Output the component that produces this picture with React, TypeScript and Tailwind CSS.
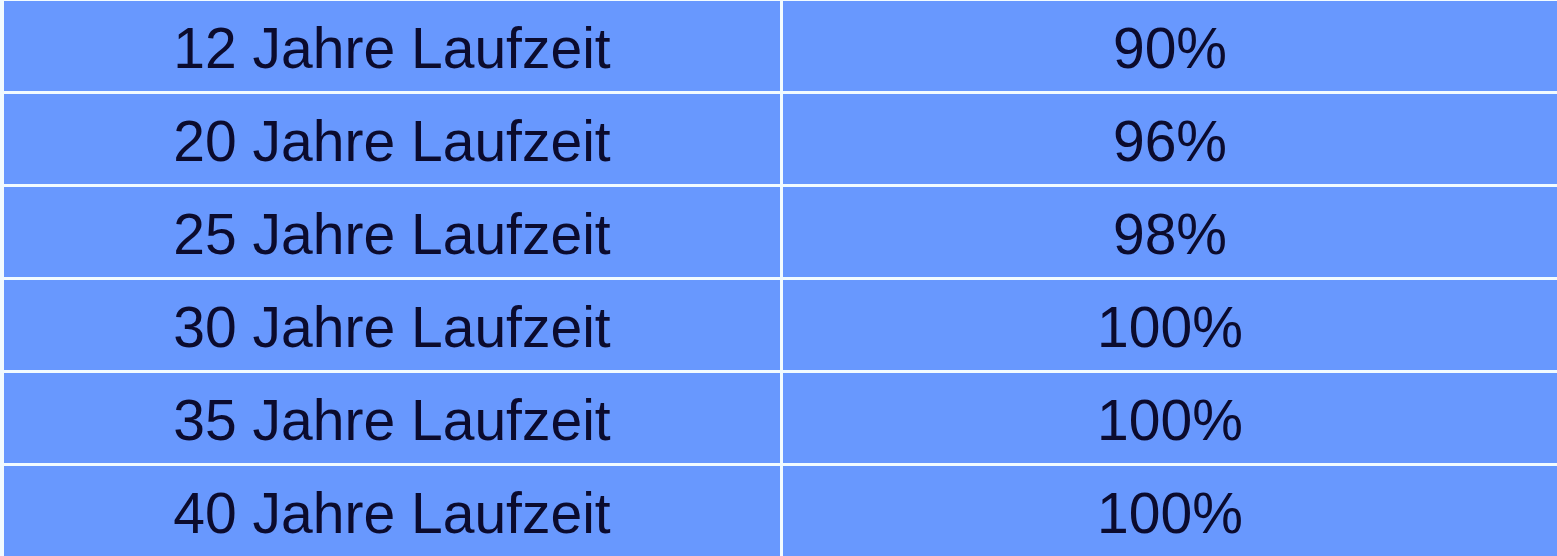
import React from "react";

const rows = [
  ["12 Jahre Laufzeit", "90%"],
  ["20 Jahre Laufzeit", "96%"],
  ["25 Jahre Laufzeit", "98%"],
  ["30 Jahre Laufzeit", "100%"],
  ["35 Jahre Laufzeit", "100%"],
  ["40 Jahre Laufzeit", "100%"],
];

export default function App() {
  return (
    <div
      className="w-[1557px] h-[556px] bg-[#f2fbff] pt-[1px] pl-[4px] flex flex-col gap-[3px] overflow-hidden"
      style={{ fontFamily: '"Liberation Sans", Arial, sans-serif' }}
    >
      {rows.map(([a, b], i) => (
        <div key={i} className="flex h-[90px] gap-[3px] shrink-0">
          <div className="w-[776px] h-full bg-[#6898fe] flex items-center justify-center pt-[5px]">
            <span className="text-[57px] leading-[57px] text-[#0b0b2e]">{a}</span>
          </div>
          <div className="flex-1 h-full bg-[#6898fe] flex items-center justify-center pt-[5px]">
            <span className="text-[57px] leading-[57px] text-[#0b0b2e]">{b}</span>
          </div>
        </div>
      ))}
    </div>
  );
}
